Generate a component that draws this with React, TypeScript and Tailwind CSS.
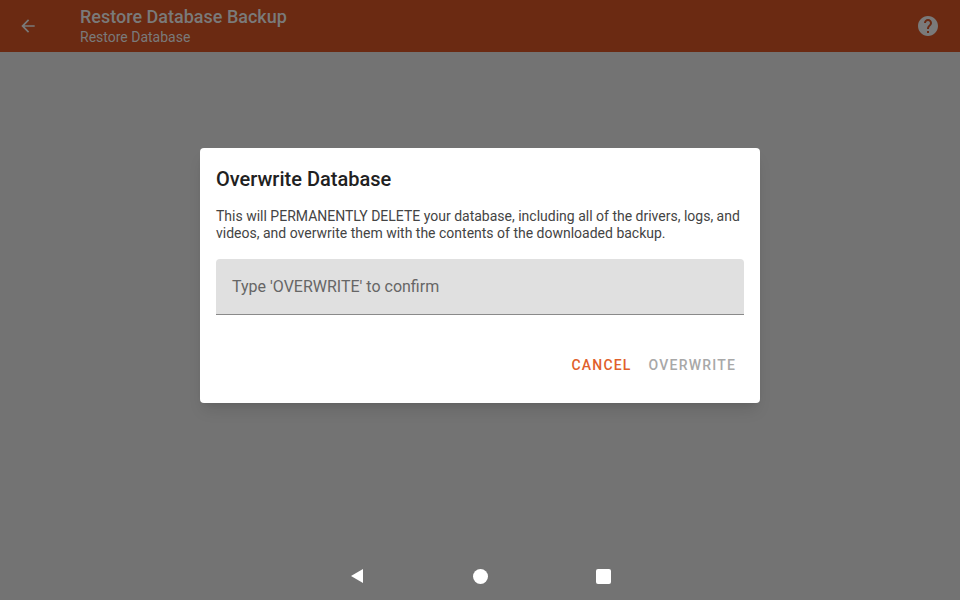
export default function App() {
  return (
    <div className="w-[960px] h-[600px] bg-[#737373] flex flex-col relative overflow-hidden" style={{ fontFamily: "Roboto, 'Noto Sans', sans-serif" }}>
      <header className="h-[52px] bg-[#6b2a12] flex items-center shrink-0">
        <div className="w-[80px] flex justify-center pr-[24px]">
          <svg width="20" height="20" viewBox="0 0 24 24" fill="#7a7a7a"><path d="M20 11H7.83l5.59-5.59L12 4l-8 8 8 8 1.41-1.41L7.83 13H20v-2z" /></svg>
        </div>
        <div className="flex-1 flex flex-col -mt-[1px]">
          <div className="text-[18px] font-medium text-[#7a7a7a] leading-[22px]">Restore Database Backup</div>
          <div className="text-[14px] text-[#7a7a7a] leading-[18px]">Restore Database</div>
        </div>
        <div className="w-[56px] flex justify-center pr-[8px]">
          <svg width="24" height="24" viewBox="0 0 24 24" fill="#7a7a7a"><path d="M12 2C6.48 2 2 6.48 2 12s4.48 10 10 10 10-4.48 10-10S17.52 2 12 2zm1 17h-2v-2h2v2zm2.07-7.75l-.9.92C13.45 12.9 13 13.5 13 15h-2v-.5c0-1.1.45-2.1 1.17-2.83l1.24-1.26c.37-.36.59-.86.59-1.41 0-1.1-.9-2-2-2s-2 .9-2 2H8c0-2.21 1.79-4 4-4s4 1.79 4 4c0 .88-.36 1.68-.93 2.25z" /></svg>
        </div>
      </header>
      <div className="flex-1 flex justify-center pt-[96px]">
        <div className="w-[560px] h-[255px] bg-white rounded-[4px] shadow-lg px-[16px] pt-[17px] flex flex-col">
          <div className="text-[20px] font-medium text-[#212121] leading-[28px]">Overwrite Database</div>
          <p className="mt-[15px] text-[14px] text-[#444] leading-[17px]">
            This will PERMANENTLY DELETE your database, including all of the drivers, logs, and videos, and overwrite them with the contents of the downloaded backup.
          </p>
          <div className="mt-[17px] h-[56px] bg-[#e0e0e0] rounded-t-[4px] border-b border-[#8a8a8a] flex items-center px-[16px]">
            <span className="text-[16px] text-[#666]">Type 'OVERWRITE' to confirm</span>
          </div>
          <div className="flex justify-end gap-[17px] mt-[40px] pr-[8px] text-[14px] font-medium tracking-[1.2px]">
            <span className="text-[#e0602c]">CANCEL</span>
            <span className="text-[#a8a8a8]">OVERWRITE</span>
          </div>
        </div>
      </div>
      <div className="h-[48px] flex items-center justify-center gap-[108px] shrink-0">
        <svg width="16" height="16" viewBox="0 0 16 16" fill="white"><path d="M14 1v14L2 8z" /></svg>
        <div className="w-[15px] h-[15px] rounded-full bg-white" />
        <div className="w-[15px] h-[15px] rounded-[2px] bg-white" />
      </div>
    </div>
  );
}
